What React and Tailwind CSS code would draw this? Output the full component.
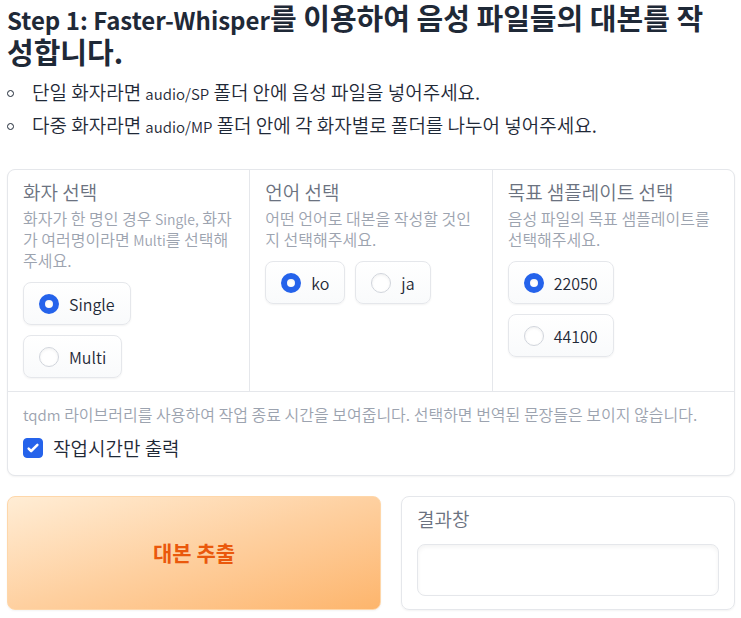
import { useState } from 'react';

const labelText = 'text-[19px] leading-[26px]';
const infoText = 'text-[16px] leading-[21px] text-[#9ca3af]';

function RadioField({ name, title, info, options }) {
  const [value, setValue] = useState(options[0]);
  return (
    <div className="min-w-0 bg-white px-[15px] pt-[9px] pb-[13px]">
      <fieldset className="min-w-0">
        <legend className={labelText + ' text-[#6b7280]'}>{title}</legend>
        <p className={infoText + ' mt-[3px] mb-[11px]'}>{info}</p>
        <div className="flex flex-wrap gap-[10px]">
          {options.map((option) => (
            <label
              key={option}
              className="flex h-[43px] items-center gap-[10px] rounded-lg border border-gray-200 bg-linear-to-b from-white to-gray-50 px-[15px] text-[16px] text-[#1f2937] shadow-xs"
            >
              <input
                type="radio"
                name={name}
                value={option}
                checked={value === option}
                onChange={() => setValue(option)}
                className="size-5 shrink-0 appearance-none rounded-full border border-gray-300 bg-white shadow-[inset_0_1px_3px_rgba(0,0,0,0.06)] checked:border-[6px] checked:border-[#2563eb]"
              />
              <span>{option}</span>
            </label>
          ))}
        </div>
      </fieldset>
    </div>
  );
}

function Bullet({ children }) {
  return (
    <li className="flex items-baseline gap-[18px]">
      <span className="size-[7px] shrink-0 -translate-y-[3px] rounded-full border border-[#1f2937]" />
      <span>{children}</span>
    </li>
  );
}

export default function App() {
  const [timeOnly, setTimeOnly] = useState(true);
  return (
    <main className="bg-white pr-[6px] pb-2 pl-[7px] font-['Noto_Sans_CJK_KR',sans-serif] font-[350] text-[#1f2937]">
      <h1 className="pr-3 text-[29px] leading-[34px] font-semibold">
        <span className="text-[24px] leading-none">Step 1: Faster-Whisper</span>를 이용하여 음성 파일들의 대본를 작성합니다.
      </h1>
      <ul className="mt-[7px] text-[19px] leading-[33px]">
        <Bullet>단일 화자라면 <span className="text-[15px] leading-none">audio/SP</span> 폴더 안에 음성 파일을 넣어주세요.</Bullet>
        <Bullet>다중 화자라면 <span className="text-[15px] leading-none">audio/MP</span> 폴더 안에 각 화자별로 폴더를 나누어 넣어주세요.</Bullet>
      </ul>

      <section className="mt-7 overflow-hidden rounded-lg border border-gray-200 bg-gray-200 shadow-xs">
        <div className="grid grid-cols-3 gap-px">
          <RadioField
            name="speaker"
            title="화자 선택"
            info={<>화자가 한 명인 경우 <span className="text-[14px] leading-none">Single,</span> 화자가 여러명이라면 <span className="text-[14px] leading-none">Multi</span>를 선택해주세요.</>}
            options={['Single', 'Multi']}
          />
          <RadioField
            name="language"
            title="언어 선택"
            info="어떤 언어로 대본을 작성할 것인지 선택해주세요."
            options={['ko', 'ja']}
          />
          <RadioField
            name="rate"
            title="목표 샘플레이트 선택"
            info="음성 파일의 목표 샘플레이트를 선택해주세요."
            options={['22050', '44100']}
          />
        </div>
        <div className="mt-px bg-white px-[15px] pt-3 pb-[14px]">
          <p className={infoText}>
            <span className="text-[15px] leading-none">tqdm</span> 라이브러리를 사용하여 작업 종료 시간을 보여줍니다. 선택하면 번역된 문장들은 보이지 않습니다.
          </p>
          <label className={labelText + ' mt-[10px] flex items-center gap-[10px]'}>
            <span className="grid size-5 shrink-0">
              <input
                type="checkbox"
                checked={timeOnly}
                onChange={(e) => setTimeOnly(e.target.checked)}
                className="col-start-1 row-start-1 size-5 appearance-none rounded border border-gray-300 bg-white checked:border-[#2563eb] checked:bg-[#2563eb]"
              />
              {timeOnly && (
                <svg viewBox="0 0 16 16" className="pointer-events-none col-start-1 row-start-1 size-5 fill-white" aria-hidden="true">
                  <path d="M12.207 4.793a1 1 0 0 1 0 1.414l-5 5a1 1 0 0 1-1.414 0l-2-2a1 1 0 0 1 1.414-1.414L6.5 9.086l4.293-4.293a1 1 0 0 1 1.414 0z" />
                </svg>
              )}
            </span>
            <span>작업시간만 출력</span>
          </label>
        </div>
      </section>

      <div className="mt-5 grid grid-cols-[374fr_334fr] gap-5">
        <button
          type="button"
          className="rounded-lg border border-[#fed7aa] bg-linear-to-br from-[#ffedd5] via-[#fed0a0] to-[#fdb56c] text-[21px] font-semibold text-[#ea580c] shadow-xs"
        >
          대본 추출
        </button>
        <div className="min-w-0 rounded-lg border border-gray-200 px-[15px] pt-[9px] pb-[13px] shadow-xs">
          <label htmlFor="result" className={labelText + ' block text-[#6b7280]'}>결과창</label>
          <textarea
            id="result"
            rows={1}
            className="mt-3 block h-[52px] w-full resize-none rounded-lg border border-gray-200 bg-white p-3 text-[16px] shadow-[inset_0_2px_4px_rgba(0,0,0,0.05)]"
          />
        </div>
      </div>
    </main>
  );
}
